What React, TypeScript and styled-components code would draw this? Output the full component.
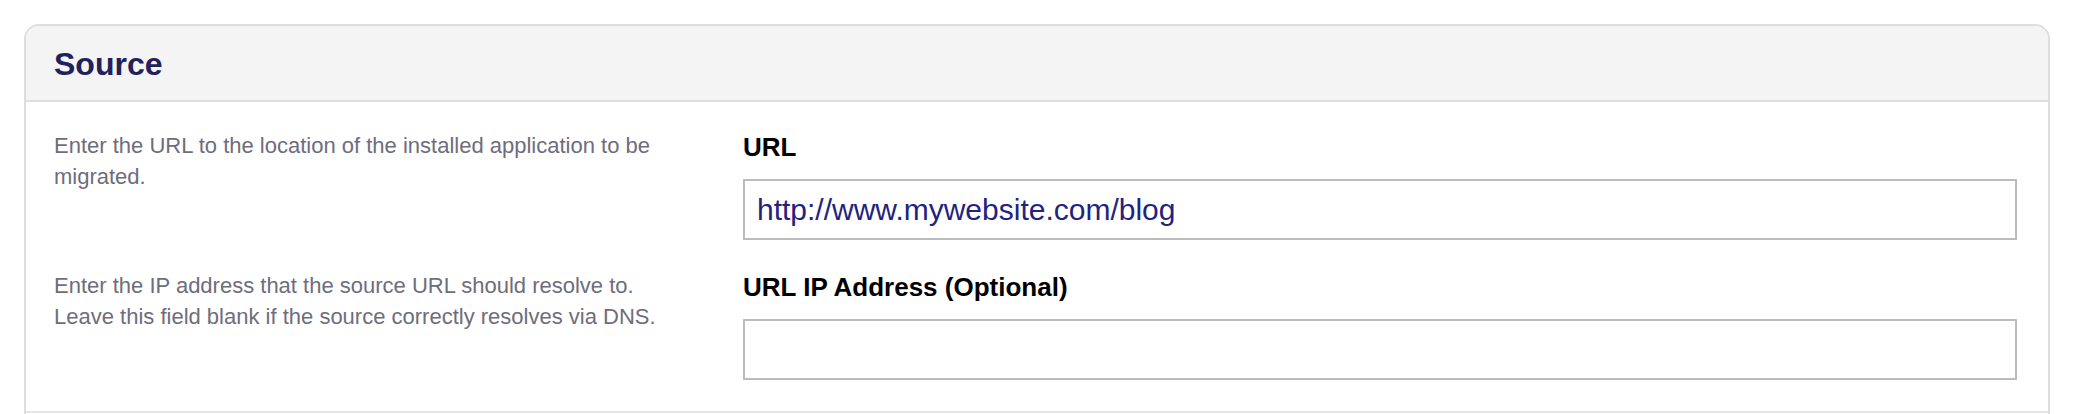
import React from "react";
import styled, { createGlobalStyle } from "styled-components";

const GlobalStyle = createGlobalStyle`
  html, body {
    margin: 0;
    padding: 0;
    background: #ffffff;
    font-family: "Liberation Sans", Arial, Helvetica, sans-serif;
  }
  * { box-sizing: border-box; }
`;

const Page = styled.div`
  padding: 24px 24px 0 24px;
`;

const Card = styled.section`
  border: 2px solid #dddddd;
  border-radius: 15px 15px 0 0;
  background: #ffffff;
  overflow: hidden;
`;

const CardHeader = styled.header`
  display: flex;
  align-items: center;
  height: 76px;
  padding: 3px 28px 0 28px;
  background: #f4f4f4;
  border-bottom: 2px solid #dddddd;
`;

const Title = styled.h2`
  margin: 0;
  font-size: 32px;
  font-weight: 700;
  color: #22215e;
  letter-spacing: 0;
`;

const CardBody = styled.div`
  display: flex;
  flex-direction: column;
  gap: 30px;
  padding: 28px 31px 31px 28px;
  border-bottom: 2px solid #e3e6e9;
`;

const Row = styled.div`
  display: grid;
  grid-template-columns: 660px 1fr;
  column-gap: 29px;
`;

const Description = styled.p`
  margin: 0;
  font-size: 22px;
  line-height: 31px;
  color: #6e6d7c;
`;

const Field = styled.div`
  display: flex;
  flex-direction: column;
  gap: 14px;
`;

const Label = styled.label`
  font-size: 26px;
  line-height: 35px;
  font-weight: 700;
  color: #000000;
`;

const TextInput = styled.input`
  display: block;
  width: 100%;
  height: 61px;
  padding: 0 12px;
  border: 2px solid #bcbcbc;
  border-radius: 0;
  background: #ffffff;
  font-family: "Liberation Sans", Arial, Helvetica, sans-serif;
  font-size: 30px;
  color: #23237f;
  outline: none;
`;

const NextSection = styled.div`
  height: 120px;
`;

type FieldDef = {
  id: string;
  lines: string[];
  label: string;
  value: string;
};

const fields: FieldDef[] = [
  {
    id: "url",
    lines: ["Enter the URL to the location of the installed application to be migrated."],
    label: "URL",
    value: "http://www.mywebsite.com/blog",
  },
  {
    id: "ip",
    lines: [
      "Enter the IP address that the source URL should resolve to.",
      "Leave this field blank if the source correctly resolves via DNS.",
    ],
    label: "URL IP Address (Optional)",
    value: "",
  },
];

export default function App() {
  return (
    <Page>
      <GlobalStyle />
      <Card>
        <CardHeader>
          <Title>Source</Title>
        </CardHeader>
        <CardBody>
          {fields.map((f) => (
            <Row key={f.id}>
              <Description>
                {f.lines.map((line, i) => (
                  <React.Fragment key={i}>
                    {i > 0 && <br />}
                    {line}
                  </React.Fragment>
                ))}
              </Description>
              <Field>
                <Label htmlFor={f.id}>{f.label}</Label>
                <TextInput id={f.id} type="text" defaultValue={f.value} />
              </Field>
            </Row>
          ))}
        </CardBody>
        <NextSection />
      </Card>
    </Page>
  );
}
